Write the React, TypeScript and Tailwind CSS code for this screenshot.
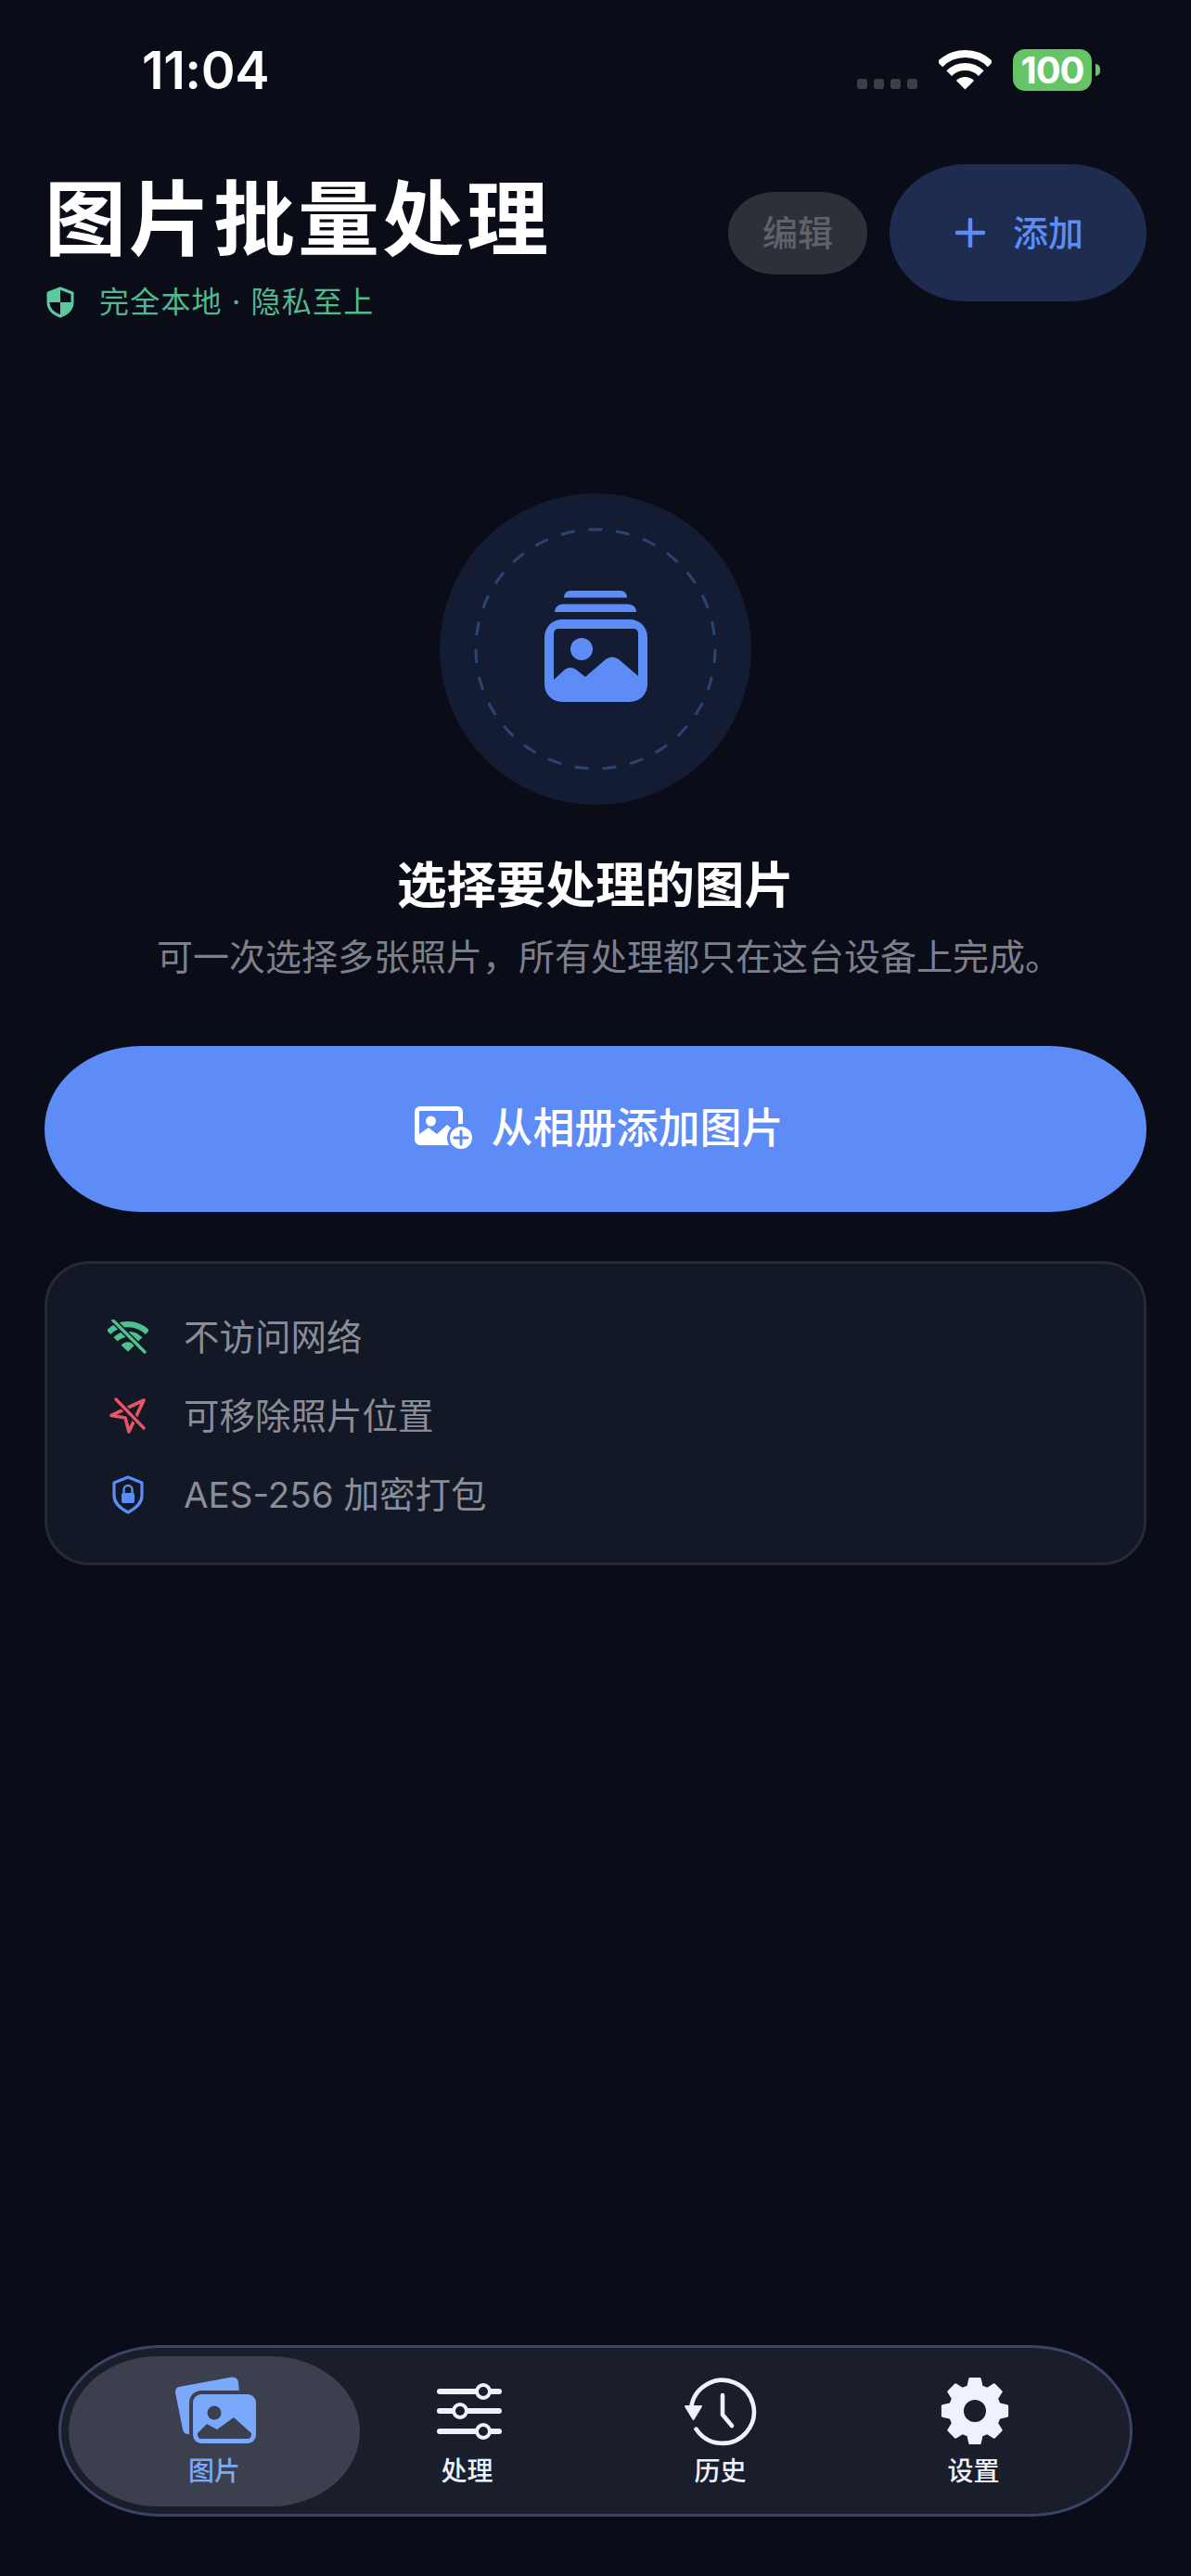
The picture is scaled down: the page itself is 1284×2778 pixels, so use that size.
import React from "react";

const gearPath = () => {
  const cx = 38, cy = 38, ro = 35, rr = 27;
  const pts: string[] = [];
  for (let i = 0; i < 8; i++) {
    const t = (i * Math.PI) / 4 - Math.PI / 2;
    const arr: [number, number][] = [[-0.27, rr], [-0.15, ro], [0.15, ro], [0.27, rr]];
    for (const [d, r] of arr) {
      pts.push(`${(cx + r * Math.cos(t + d)).toFixed(2)} ${(cy + r * Math.sin(t + d)).toFixed(2)}`);
    }
  }
  return "M" + pts.join("L") + "Z";
};

function WifiGlyph({ color }: { color: string }) {
  return (
    <>
      <path d="M1.3 15.3A38.5 38.5 0 0 1 55.7 15.3" fill="none" stroke={color} strokeWidth="8" />
      <path d="M11.2 25.2A24.5 24.5 0 0 1 45.8 25.2" fill="none" stroke={color} strokeWidth="8" />
      <path d="M28.5 42.5L18.9 33A13.5 13.5 0 0 1 38.1 33Z" fill={color} />
    </>
  );
}

function StatusBar() {
  return (
    <div className="flex h-[177px] items-start pl-[153px] pr-[98px] pt-[46px]">
      <div className="text-[56px] leading-[60px] font-semibold tracking-[-0.5px] text-white">11:04</div>
      <div className="ml-auto mt-[7px] flex items-start">
        <div className="mt-[32px] flex gap-[7px]">
          <div className="h-[11px] w-[11px] rounded-[3px] bg-[#3c3f48]" />
          <div className="h-[11px] w-[11px] rounded-[3px] bg-[#3c3f48]" />
          <div className="h-[11px] w-[11px] rounded-[3px] bg-[#3c3f48]" />
          <div className="h-[11px] w-[11px] rounded-[3px] bg-[#3c3f48]" />
        </div>
        <svg width="57" height="43" viewBox="0 0 57 43" className="ml-[23px] mt-[1px]">
          <WifiGlyph color="#ffffff" />
        </svg>
        <div className="ml-[23px] flex h-[45px] w-[85px] items-center justify-center rounded-[13px] bg-[#65c466] text-[40px] leading-none font-bold tracking-[-1px] text-white">
          100
        </div>
        <div className="ml-[4px] mt-[16px] h-[13px] w-[5px] rounded-r-full bg-[#65c466]" />
      </div>
    </div>
  );
}

function Header() {
  return (
    <div className="flex items-start justify-between pl-[50px] pr-[48px]">
      <div className="pt-[9px]">
        <div className="-ml-[2px] text-[88px] leading-[100px] font-bold tracking-[3px] text-white">图片批量处理</div>
        <div className="mt-[20px] flex items-center">
          <svg width="32" height="34" viewBox="0 0 32 34" className="-ml-[1px]">
            <path d="M16 2L29 7V17C29 24 24 29 16 32C8 29 3 24 3 17V7Z" fill="none" stroke="#5ec8a0" strokeWidth="3" strokeLinejoin="round" />
            <path d="M16 2L3 7V17H16Z" fill="#5ec8a0" />
            <path d="M16 17H29C29 24 24 29 16 32Z" fill="#5ec8a0" />
          </svg>
          <div className="ml-[26px] text-[32px] leading-[40px] tracking-[1.2px] text-[#4fb98f]">完全本地 · 隐私至上</div>
        </div>
      </div>
      <div className="flex items-center gap-[24px]">
        <div className="flex h-[89px] w-[150px] items-center justify-center rounded-[50px/44px] bg-[#2e3039] text-[38px] font-medium leading-none text-[#5f616b]">
          编辑
        </div>
        <div className="flex h-[148px] w-[277px] items-center justify-center gap-[30px] rounded-[82px/74px] bg-[#1e2c50] pl-[3px]">
          <svg width="32" height="32" viewBox="0 0 32 32">
            <path d="M16 2V30M2 16H30" stroke="#5c8cf5" strokeWidth="4.5" strokeLinecap="round" />
          </svg>
          <span className="text-[38px] font-medium leading-none text-[#5c8cf5]">添加</span>
        </div>
      </div>
    </div>
  );
}

function HeroIcon() {
  return (
    <svg width="111" height="120" viewBox="0 0 111 120" className="mb-[6px]">
      <path d="M21 7.5C21 3 24 0 28 0H82C86 0 89 3 89 7.5Z" fill="#5e8cf7" />
      <path d="M11 23C11 18 15 14.5 20 14.5H90C95 14.5 99 18 99 23Z" fill="#5e8cf7" />
      <rect x="0" y="31" width="111" height="89" rx="19" fill="#5e8cf7" />
      <path d="M10 96V46a5 5 0 0 1 5-5H96a5 5 0 0 1 5 5V92L80 74Q73 69 66 74L44 93L34 85Q28 81 22 85Z" fill="#131c33" />
      <circle cx="40" cy="63" r="12" fill="#5e8cf7" />
    </svg>
  );
}

function Hero() {
  return (
    <div className="mt-[186px] flex flex-col items-center">
      <div className="flex h-[336px] w-[336px] items-center justify-center rounded-full bg-[#131c33]">
        <div className="flex h-[260px] w-[260px] items-center justify-center">
          <svg width="264" height="264" viewBox="0 0 264 264" className="absolute">
            <circle cx="132" cy="132" r="129" fill="none" stroke="#2c4470" strokeWidth="3" strokeDasharray="15 15" />
          </svg>
          <HeroIcon />
        </div>
      </div>
      <div className="mt-[57px] text-[53.5px] leading-[60px] font-semibold text-white">选择要处理的图片</div>
      <div className="ml-[29px] mt-[22px] whitespace-nowrap text-[39px] leading-[50px] text-[#7d808b]">可一次选择多张照片，所有处理都只在这台设备上完成。</div>
    </div>
  );
}

function PrimaryButton() {
  return (
    <div className="mx-[48px] mt-[71px] flex h-[179px] items-center justify-center gap-[20px] rounded-[104px/89px] bg-[#5e8cf7]">
      <svg width="62" height="50" viewBox="0 0 62 50" className="ml-[8px]">
        <path fillRule="evenodd" d="M6 0H46a6 6 0 0 1 6 6V36a6 6 0 0 1-6 6H6a6 6 0 0 1-6-6V6a6 6 0 0 1 6-6ZM5 6V30L15 23L24 30L35 20L47 30V6a1 1 0 0 0-1-1H6a1 1 0 0 0-1 1Z" fill="#ffffff" />
        <circle cx="17.5" cy="16" r="5.5" fill="#ffffff" />
        <circle cx="50" cy="34" r="15" fill="#5e8cf7" />
        <circle cx="50" cy="34" r="12" fill="#ffffff" />
        <path d="M50 27V41M43 34H57" stroke="#5e8cf7" strokeWidth="3" strokeLinecap="round" />
      </svg>
      <span className="-mt-[2px] text-[45px] font-medium leading-none text-white">从相册添加图片</span>
    </div>
  );
}

function InfoCard() {
  const rows = [
    {
      text: "不访问网络",
      icon: (
        <svg width="44" height="38" viewBox="0 0 44 38">
          <g transform="translate(0 2) scale(0.77)">
            <WifiGlyph color="#4fc08f" />
          </g>
          <path d="M6 1L40 35" stroke="#121825" strokeWidth="6.5" />
          <path d="M6 1L40 35" stroke="#4fc08f" strokeWidth="3.4" strokeLinecap="round" />
        </svg>
      ),
    },
    {
      text: "可移除照片位置",
      icon: (
        <svg width="44" height="40" viewBox="-2 0 44 40">
          <path d="M37 3L2 19.5L17 22L21 37Z" fill="none" stroke="#ea5566" strokeWidth="3.6" strokeLinejoin="round" />
          <path d="M7 2L37 33" stroke="#121825" strokeWidth="6.5" />
          <path d="M7 2L37 33" stroke="#ea5566" strokeWidth="3.4" strokeLinecap="round" />
        </svg>
      ),
    },
    {
      text: "AES-256 加密打包",
      icon: (
        <svg width="44" height="42" viewBox="0 0 44 42">
          <path d="M22 2L37 8V22C37 30 31 35 22 40C13 35 7 30 7 22V8Z" fill="none" stroke="#5c8cf5" strokeWidth="3.2" strokeLinejoin="round" />
          <rect x="15" y="19" width="14" height="11" rx="2" fill="#5c8cf5" />
          <path d="M17.5 19V15.5a4.5 4.5 0 0 1 9 0V19" fill="none" stroke="#5c8cf5" strokeWidth="2.4" />
        </svg>
      ),
    },
  ];
  return (
    <div className="mx-[48px] mt-[53px] flex h-[328px] flex-col justify-center gap-[43px] rounded-[48px] border-[3px] border-[#262a36] bg-[#121825] pl-[65px] pt-[5px]">
      {rows.map((r) => (
        <div key={r.text} className="flex h-[42px] items-center gap-[38px]">
          <div className="flex w-[44px] justify-center">{r.icon}</div>
          <span className="text-[38.5px] leading-[42px] text-[#8a8d98]">{r.text}</span>
        </div>
      ))}
    </div>
  );
}

const tabIconColor = "#eef2fd";

function TabBar() {
  return (
    <div className="mx-[63px] mb-[64px] mt-auto flex h-[185px] items-center rounded-[110px/92px] border-[3px] border-[#3a4468] bg-[#1a1e2a] pl-[28px]">
      <div className="-ml-[20px] -mr-[21px] flex h-[162px] w-[314px] shrink-0 flex-col items-center rounded-[96px/81px] bg-[#3c3f4d] pt-[21px]">
        <svg width="110" height="76" viewBox="0 0 110 76">
          <g transform="translate(4 0)">
            <path d="M13 12L70 1.5Q76 1 77 7L78 20H40V63H23Q18 63 17 58L9 18Q9 13 13 12Z" fill="#7aa9fb" />
          </g>
          <g transform="translate(4 -2)">
            <rect x="24" y="18" width="74" height="61" rx="13" fill="#3c3f4d" />
            <rect x="28" y="22" width="68" height="53" rx="9" fill="#7aa9fb" />
            <circle cx="51" cy="42" r="7.5" fill="#3c3f4d" />
            <path d="M33 65V64L43 54L54 60L72 47L91 64V65Q91 70 87 70H37Q33 70 33 65Z" fill="#3c3f4d" />
          </g>
        </svg>
        <span className="mt-[9px] text-[28px] font-medium leading-[36px] text-[#7aa9fb]">图片</span>
      </div>
      <div className="flex h-[162px] w-[273px] shrink-0 flex-col items-center pt-[21px]">
        <svg width="76" height="76" viewBox="0 0 76 76">
          <path d="M8 17H72M8 38H72M8 60H72" stroke={tabIconColor} strokeWidth="6" strokeLinecap="round" fill="none" />
          <g stroke={tabIconColor} strokeWidth="4" fill="#1a1e2a">
            <circle cx="55" cy="17" r="7" />
            <circle cx="30" cy="38" r="7" />
            <circle cx="55" cy="60" r="7" />
          </g>
        </svg>
        <span className="mt-[9px] text-[28px] font-medium leading-[36px] text-[#eef2fd]">处理</span>
      </div>
      <div className="flex h-[162px] w-[273px] shrink-0 flex-col items-center pt-[21px]">
        <svg width="84" height="76" viewBox="0 0 84 76" className="ml-[3px]">
          <path d="M9.1 35A34 34 0 1 1 14.5 57.6" fill="none" stroke={tabIconColor} strokeWidth="4.6" strokeLinecap="round" />
          <path d="M3 33H20L11.5 47Z" fill={tabIconColor} stroke={tabIconColor} strokeWidth="2" strokeLinejoin="round" />
          <path d="M43 21V42L53 54" fill="none" stroke={tabIconColor} strokeWidth="4.6" strokeLinecap="round" strokeLinejoin="round" />
        </svg>
        <span className="mt-[9px] text-[28px] font-medium leading-[36px] text-[#eef2fd]">历史</span>
      </div>
      <div className="flex h-[162px] w-[273px] shrink-0 flex-col items-center pt-[21px]">
        <svg width="76" height="76" viewBox="0 0 76 76" className="ml-[3px]">
          <path d={gearPath()} fill={tabIconColor} stroke={tabIconColor} strokeWidth="3" strokeLinejoin="round" />
          <circle cx="38" cy="38" r="12" fill="#1a1e2a" />
        </svg>
        <span className="mt-[9px] text-[28px] font-medium leading-[36px] text-[#eef2fd]">设置</span>
      </div>
    </div>
  );
}

export default function App() {
  return (
    <div
      lang="zh-CN"
      className="flex h-[2778px] w-[1284px] flex-col overflow-hidden bg-[#0a0c17] [font-family:Inter,'Noto_Sans_CJK_SC',sans-serif]"
    >
      <StatusBar />
      <Header />
      <Hero />
      <PrimaryButton />
      <InfoCard />
      <TabBar />
    </div>
  );
}
